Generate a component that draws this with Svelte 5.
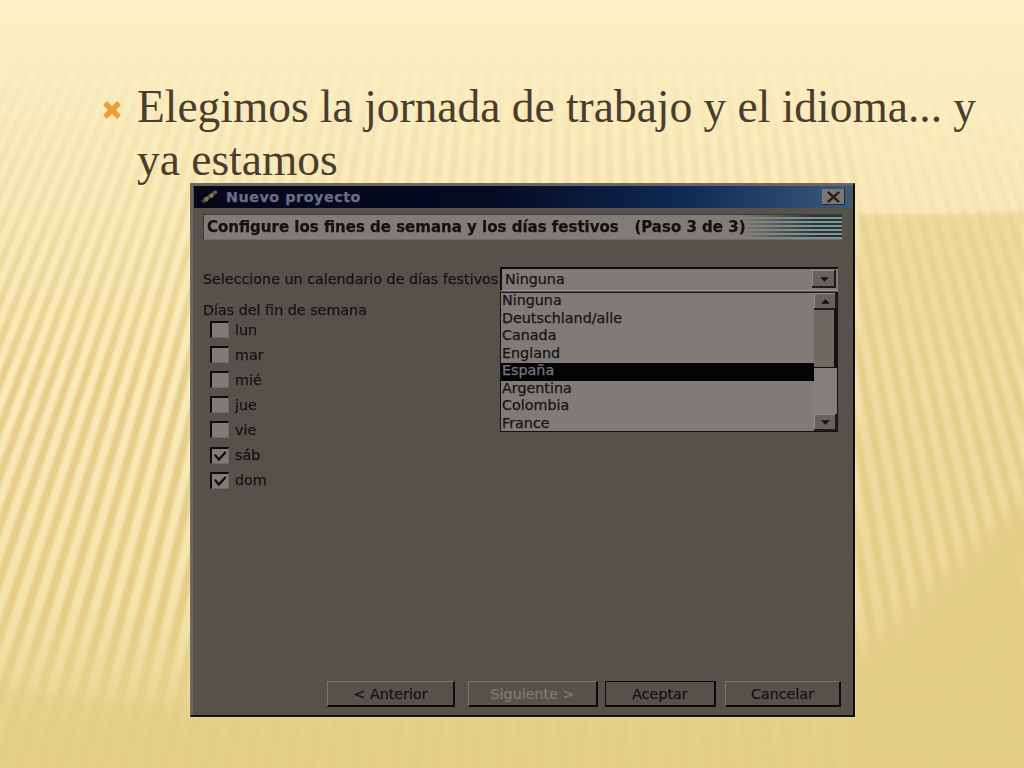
<script>
	const days = [
		{ name: 'lun', checked: false },
		{ name: 'mar', checked: false },
		{ name: 'mié', checked: false },
		{ name: 'jue', checked: false },
		{ name: 'vie', checked: false },
		{ name: 'sáb', checked: true },
		{ name: 'dom', checked: true }
	];
	const calendars = ['Ninguna', 'Deutschland/alle', 'Canada', 'England', 'España', 'Argentina', 'Colombia', 'France'];

	// wallpaper stripes fan out from a point far above the slide
	const VX = 580;
	const VY = -1124;
	const BOTTOM = 800;
	const STEP = 19;
	function ray(x, y) {
		// x is measured on the line y = 600
		const t = (y - VY) / (600 - VY);
		return (VX + (x - VX) * t).toFixed(1);
	}
	function band(a, b) {
		return `${ray(a, 0)},0 ${ray(b, 0)},0 ${ray(b, BOTTOM)},${BOTTOM} ${ray(a, BOTTOM)},${BOTTOM}`;
	}
	const dark = [];
	const light = [];
	for (let x = -240; x < 1300; x += STEP) {
		dark.push(band(x, x + STEP * 0.5));
		light.push(band(x + STEP * 0.5, x + STEP));
	}
</script>

<div class="slide">
	<svg class="wallpaper" viewBox="0 0 1024 768" aria-hidden="true">
		<defs>
			<linearGradient id="base" x1="0" y1="0" x2="0" y2="1">
				<stop offset="0" stop-color="#fdf0c6" />
				<stop offset="0.3" stop-color="#f9e9b8" />
				<stop offset="0.7" stop-color="#f0dc9e" />
				<stop offset="1" stop-color="#e4cf86" />
			</linearGradient>
			<linearGradient id="fade" x1="0" y1="0" x2="0" y2="1">
				<stop offset="0.05" stop-color="#000" />
				<stop offset="0.25" stop-color="#555" />
				<stop offset="0.5" stop-color="#ddd" />
				<stop offset="0.78" stop-color="#bbb" />
				<stop offset="0.92" stop-color="#333" />
				<stop offset="1" stop-color="#222" />
			</linearGradient>
			<mask id="stripeMask" maskUnits="userSpaceOnUse" x="0" y="0" width="1024" height="768">
				<rect width="1024" height="768" fill="url(#fade)" />
				<rect x="856" width="168" height="768" fill="#000" opacity="0.5" />
			</mask>
			<filter id="soft"><feGaussianBlur stdDeviation="1.5" /></filter>
			<filter id="softer"><feGaussianBlur stdDeviation="2" /></filter>
			<filter id="softest"><feGaussianBlur stdDeviation="7" /></filter>
		</defs>
		<rect width="1024" height="768" fill="url(#base)" />
		<path d="M858 214 C920 216 980 214 1024 212 V768 H858 Z" fill="#e2cc84" opacity="0.6" filter="url(#softer)" />
		<g mask="url(#stripeMask)" filter="url(#soft)">
			{#each dark as points}
				<polygon {points} fill="#e0c67c" opacity="0.85" />
			{/each}
			{#each light as points}
				<polygon {points} fill="#fdf0c2" opacity="0.7" />
			{/each}
		</g>
		<path d="M850 665 L1034 490 V778 H850 Z" fill="#e3ce87" opacity="0.85" filter="url(#softest)" />
		<path d="M0 768 V690 C300 720 700 720 1024 690 V768 Z" fill="#e4cf86" opacity="0.5" filter="url(#softer)" />
	</svg>

	<div class="bullet">
		<svg class="mark" viewBox="0 0 20 20" aria-hidden="true">
			<path d="M3 3 L17 17 M17 3 L3 17" stroke="#e89f33" stroke-width="5.4" />
		</svg>
		<p>Elegimos la jornada de trabajo y el idioma... y ya estamos</p>
	</div>

	<div class="dialog">
		<div class="titlebar">
			<svg class="app-icon" viewBox="0 0 20 16" aria-hidden="true">
				<path d="M3 13 L16 3" stroke="#4a4638" stroke-width="4" />
				<circle cx="7" cy="10" r="2.2" fill="#8a7a45" />
				<circle cx="12" cy="6.5" r="2.2" fill="#8a7a45" />
				<circle cx="16" cy="3" r="1.6" fill="#6d6a5c" />
			</svg>
			<span class="title">Nuevo proyecto</span>
			<span class="close">
				<svg viewBox="0 0 20 14" aria-hidden="true">
					<path d="M5 2.5 L15 11.5 M15 2.5 L5 11.5" stroke="#24221f" stroke-width="2.2" />
				</svg>
			</span>
		</div>

		<div class="body">
			<div class="step">
				<span>Configure los fines de semana y los días festivos&nbsp;&nbsp; (Paso 3 de 3)</span>
			</div>

			<div class="calendar-row">
				<span class="calendar-label">Seleccione un calendario de días festivos</span>
				<div class="combo">
					<div class="combo-field">
						<span>Ninguna</span>
						<span class="arrow-btn">
							<svg viewBox="0 0 10 6" aria-hidden="true"><path d="M1 1 H9 L5 5 Z" fill="#141210" /></svg>
						</span>
					</div>
					<div class="dropdown">
						<ul>
							{#each calendars as name}
								<li class:selected={name === 'España'}>{name}</li>
							{/each}
						</ul>
						<div class="scrollbar">
							<span class="arrow-btn small">
								<svg viewBox="0 0 10 6" aria-hidden="true"><path d="M1 5 H9 L5 1 Z" fill="#141210" /></svg>
							</span>
							<span class="thumb"></span>
							<span class="track"></span>
							<span class="arrow-btn small">
								<svg viewBox="0 0 10 6" aria-hidden="true"><path d="M1 1 H9 L5 5 Z" fill="#141210" /></svg>
							</span>
						</div>
					</div>
				</div>
			</div>

			<div class="weekend">Días del fin de semana</div>
			<div class="days">
				{#each days as day}
					<div class="day">
						<span class="box">
							{#if day.checked}
								<svg viewBox="0 0 14 12" aria-hidden="true">
									<path d="M2.5 5 L6 9 L12 2.5" fill="none" stroke="#0d0c0b" stroke-width="2" />
								</svg>
							{/if}
						</span>
						<span>{day.name}</span>
					</div>
				{/each}
			</div>

			<div class="buttons">
				<span class="btn prev">&lt; Anterior</span>
				<span class="btn next">Siguiente &gt;</span>
				<span class="btn ok">Aceptar</span>
				<span class="btn cancel">Cancelar</span>
			</div>
		</div>
	</div>
</div>

<style>
	:global(body) {
		margin: 0;
	}

	.slide {
		position: relative;
		width: 1024px;
		height: 768px;
		overflow: hidden;
		display: flex;
		flex-direction: column;
		font-family: 'DejaVu Sans', sans-serif;
	}

	.wallpaper {
		position: absolute;
		inset: 0;
		width: 1024px;
		height: 768px;
	}

	.bullet {
		position: relative;
		display: flex;
		align-items: flex-start;
		height: 103px;
		margin: 80px 30px 0 102px;
		font-family: 'Liberation Serif', serif;
		font-size: 45.45px;
		line-height: 53px;
		color: #4a3d2e;
	}

	.mark {
		flex: none;
		width: 20px;
		height: 20px;
		margin: 20px 15px 0 0;
	}

	.bullet p {
		margin: 0;
	}

	.dialog {
		position: relative;
		box-sizing: border-box;
		width: 665px;
		height: 534px;
		margin-left: 190px;
		padding: 2px 2px 3px 3px;
		display: flex;
		flex-direction: column;
		background: #56514a;
		border: 1px solid #6e6a64;
		border-right: 2px solid #0f0e0d;
		border-bottom: 2px solid #111;
		box-shadow: inset 2px 2px 0 #6a665f, 0 0 1px #fff6d0;
		color: #171312;
		font-size: 14.3px;
		-webkit-text-stroke: 0.25px;
		filter: blur(0.4px);
	}

	.titlebar {
		flex: none;
		height: 22px;
		display: flex;
		align-items: center;
		padding: 0 6px 0 5px;
		background: linear-gradient(90deg, #060818 0%, #050a22 45%, #0f2a55 75%, #3a5a7c 100%);
	}

	.app-icon {
		width: 21px;
		height: 16px;
		margin-right: 6px;
	}

	.title {
		flex: 1;
		font-weight: bold;
		font-size: 14.3px;
		letter-spacing: 0.55px;
		color: #6a6e8c;
	}

	.close {
		display: flex;
		width: 23px;
		height: 16px;
		background: #7b7771;
		box-shadow: inset -1px -1px 0 #2a2825;
	}

	.close svg {
		width: 100%;
		height: 100%;
	}

	.body {
		flex: 1;
		min-height: 0;
		display: flex;
		flex-direction: column;
		padding: 6px 9px 5px 9px;
	}

	.step {
		flex: none;
		box-sizing: border-box;
		height: 26px;
		display: flex;
		align-items: center;
		padding-left: 3px;
		font-weight: bold;
		font-size: 15px;
		color: #14110f;
		background:
			linear-gradient(90deg, #807c77 0%, #807c77 84%, rgba(128, 124, 119, 0) 96%),
			repeating-linear-gradient(180deg, #1c3a3c 0 2px, #8a8f8d 2px 4px);
		border-top: 1px solid #3e3b36;
		border-left: 1px solid #3e3b36;
		border-bottom: 1px solid #6f6b65;
	}

	.calendar-row {
		flex: none;
		display: flex;
		align-items: center;
		height: 24px;
		margin-top: 27px;
	}

	.calendar-label {
		flex: none;
		width: 297px;
		white-space: nowrap;
	}

	.combo {
		position: relative;
		flex: 1;
		margin-right: 4px;
	}

	.combo-field {
		box-sizing: border-box;
		height: 24px;
		display: flex;
		align-items: center;
		justify-content: space-between;
		padding: 0 2px 1px 3px;
		background: #7f7b76;
		border-top: 2px solid #100e0d;
		border-left: 2px solid #100e0d;
		border-bottom: 1px solid #9a9691;
	}

	.arrow-btn {
		flex: none;
		width: 24px;
		height: 18px;
		display: flex;
		align-items: center;
		justify-content: center;
		background: #66625c;
		box-shadow: inset -2px -2px 0 #1f1d1b, inset 1px 1px 0 #8f8b85;
	}

	.arrow-btn svg {
		width: 11px;
		height: 7px;
	}

	/* the open list lies over the rest of the form */
	.dropdown {
		position: absolute;
		z-index: 1;
		left: 0;
		right: 0;
		top: 25px;
		height: 140px;
		box-sizing: border-box;
		display: flex;
		background: #7f7b76;
		border: 1px solid #14120f;
		border-top: 1px solid #1e1c19;
	}

	.dropdown ul {
		flex: 1;
		list-style: none;
		margin: 0;
		padding: 0;
	}

	.dropdown li {
		height: 17.5px;
		line-height: 15.5px;
		padding-left: 1px;
	}

	.dropdown li.selected {
		background: #050508;
		color: #75757f;
	}

	.scrollbar {
		flex: none;
		width: 23px;
		display: flex;
		flex-direction: column;
	}

	.arrow-btn.small {
		width: 23px;
		height: 17px;
	}

	.thumb {
		height: 58px;
		background: #6c6862;
		box-shadow: inset -3px -1px 0 #141210;
	}

	.track {
		flex: 1;
		background: #827e79;
	}

	.weekend {
		flex: none;
		margin-top: 9px;
		line-height: 20px;
	}

	.days {
		flex: none;
		display: flex;
		flex-direction: column;
		margin-top: -3px;
		margin-left: 7px;
	}

	.day {
		display: flex;
		align-items: center;
		height: 25.1px;
	}

	.box {
		flex: none;
		box-sizing: border-box;
		width: 19px;
		height: 17px;
		margin-right: 6px;
		background: #7f7b76;
		border-top: 2px solid #0e0d0c;
		border-left: 2px solid #0e0d0c;
		border-right: 1px solid #6d6963;
		border-bottom: 1px solid #6d6963;
		display: flex;
	}

	.box svg {
		width: 100%;
		height: 100%;
	}

	.buttons {
		margin-top: auto;
		display: flex;
		padding-left: 124px;
	}

	.btn {
		flex: none;
		box-sizing: border-box;
		height: 26px;
		display: flex;
		align-items: center;
		justify-content: center;
		background: #56514a;
		border-top: 1px solid #77736d;
		border-left: 1px solid #77736d;
		border-right: 2px solid #0e0d0c;
		border-bottom: 2px solid #0e0d0c;
	}

	.prev {
		width: 128px;
	}

	.next {
		width: 130px;
		margin-left: 13px;
		color: #7f7b76;
	}

	.ok {
		width: 111px;
		margin-left: 7px;
		outline: 1px solid #0e0d0c;
		outline-offset: -1px;
	}

	.cancel {
		width: 116px;
		margin-left: 9px;
	}
</style>
